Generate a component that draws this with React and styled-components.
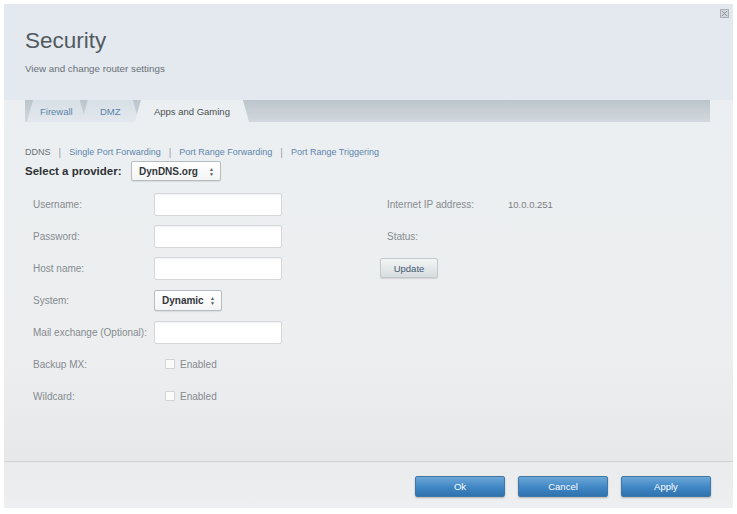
import React from "react";
import styled, { createGlobalStyle } from "styled-components";

const GlobalReset = createGlobalStyle`
  html,
  body,
  #root {
    margin: 0;
    padding: 0;
    box-sizing: border-box;
    background: #ffffff;
  }
  * { box-sizing: border-box; }
  body { font-family: "Liberation Sans", Arial, sans-serif; }
`;

const Frame = styled.div`
  width: 737px;
  height: 514px;
  padding: 4px 4px 6px 4px;
`;

const Panel = styled.div`
  width: 100%;
  height: 100%;
  display: flex;
  flex-direction: column;
  background: #eceff1;
  position: relative;
`;

const Header = styled.div`
  height: 96px;
  background: #e3e9ef;
  padding: 24px 0 0 21px;
  display: flex;
  flex-direction: column;
`;

const Title = styled.h1`
  margin: 0;
  font-size: 22.5px;
  font-weight: normal;
  color: #525a60;
`;

const Subtitle = styled.div`
  margin-top: 9px;
  font-size: 9.8px;
  color: #6a7075;
`;

const CloseIcon = styled.div`
  position: absolute;
  top: 5px;
  right: 4px;
  width: 9px;
  height: 9px;
  border: 1px solid #a9afb4;
  background: #d3d8dc;
  display: flex;
  align-items: center;
  justify-content: center;
`;

const TabRow = styled.div`
  height: 22px;
  margin: 0 23px 0 21px;
  display: flex;
  background: linear-gradient(to bottom, #bcc5cc, #d2d8dd);
`;

const Tab = styled.div`
  height: 22px;
  padding: 0 ${(p) => (p.$active ? "19px" : "13px")};
  margin-left: ${(p) => (p.$first ? "2px" : "-4px")};
  display: flex;
  align-items: center;
  font-size: 9.5px;
  color: ${(p) => (p.$active ? "#4a4f53" : "#5b85ad")};
  background: ${(p) =>
    p.$active ? "#eceff1" : "linear-gradient(to bottom, #d7dfe6, #e2e8ed)"};
  clip-path: polygon(6px 0, calc(100% - 6px) 0, 100% 100%, 0 100%);
  z-index: ${(p) => (p.$active ? 2 : 1)};
`;

const Body = styled.div`
  flex: 1;
  padding: 24px 0 0 21px;
  display: flex;
  flex-direction: column;
  background: linear-gradient(to bottom, #eceff1 0%, #eceef0 70%, #e6e8ea 100%);
  border-bottom: 1px solid #cdd1d4;
`;

const SubNav = styled.div`
  display: flex;
  align-items: center;
  font-size: 9px;
  color: #6b7075;
  height: 12px;
`;

const SubLink = styled.span`
  color: ${(p) => (p.$current ? "#6b7075" : "#5d86ad")};
`;

const Sep = styled.span`
  color: #9aa0a5;
  margin: 0 8px;
  font-size: 10px;
`;

const ProviderRow = styled.div`
  display: flex;
  align-items: center;
  margin-top: 3px;
  height: 20px;
`;

const ProviderLabel = styled.span`
  font-size: 11.5px;
  font-weight: bold;
  color: #2e3235;
  width: 106px;
`;

const Select = styled.div`
  width: ${(p) => p.$w}px;
  height: ${(p) => p.$h}px;
  border: 1px solid #b7bcc0;
  border-radius: 2px;
  background: linear-gradient(#ffffff, #f3f4f5);
  box-shadow: 0 1px 1px rgba(0, 0, 0, 0.08);
  display: flex;
  align-items: center;
  justify-content: space-between;
  padding: 0 6px 0 7px;
  font-size: 10px;
  font-weight: bold;
  color: #33373a;
`;

const Arrows = styled.span`
  display: flex;
  flex-direction: column;
  align-items: center;
  gap: 1px;
  font-size: 5px;
  line-height: 4px;
  color: #55595c;
`;

const Content = styled.div`
  display: flex;
  margin-top: 12px;
`;

const FormCol = styled.div`
  width: 355px;
  display: flex;
  flex-direction: column;
  gap: 10px;
  padding-left: 8px;
`;

const Row = styled.div`
  height: 22px;
  display: flex;
  align-items: center;
`;

const Label = styled.span`
  width: ${(p) => p.$w || 121}px;
  font-size: 10px;
  color: #868b8f;
  white-space: nowrap;
`;

const Input = styled.div`
  width: 128px;
  height: 23px;
  background: #ffffff;
  border: 1px solid #d3d7da;
  border-radius: 2px;
  box-shadow: inset 0 1px 1px rgba(0, 0, 0, 0.05);
`;

const CheckWrap = styled.label`
  display: flex;
  align-items: center;
  margin-left: 11px;
  font-size: 10px;
  color: #868b8f;
  gap: 5px;
`;

const Checkbox = styled.span`
  width: 10px;
  height: 10px;
  background: #fbfbfb;
  border: 1px solid #cfd3d6;
  border-radius: 1px;
`;

const InfoCol = styled.div`
  display: flex;
  flex-direction: column;
  gap: 10px;
`;

const InfoRow = styled(Row)`
  padding-left: 7px;
`;

const InfoValue = styled.span`
  font-size: 9.5px;
  color: #7b8084;
`;

const UpdateButton = styled.button`
  width: 58px;
  height: 20px;
  margin-left: -7px;
  border: 1px solid #c3c8cc;
  border-radius: 2px;
  background: linear-gradient(#f3f5f6, #d7dcdf);
  box-shadow: 0 1px 1px rgba(0, 0, 0, 0.12);
  font-family: inherit;
  font-size: 9.5px;
  color: #3f5a70;
  padding: 0;
`;

const Footer = styled.div`
  height: 46px;
  display: flex;
  justify-content: flex-end;
  align-items: center;
  gap: 13px;
  padding: 2px 22px 0 0;
  background: linear-gradient(to bottom, #e9ebed, #eeeff1);
`;

const BlueButton = styled.button`
  width: 90px;
  height: 21px;
  border: 1px solid #3f77a6;
  border-radius: 2px;
  background: linear-gradient(#6da8d8, #3f86c4 55%, #2f73ae);
  box-shadow: 0 1px 2px rgba(0, 0, 0, 0.25);
  color: #ffffff;
  font-family: inherit;
  font-size: 9.5px;
  padding: 0;
`;

const fields = [
  { label: "Username:", kind: "input" },
  { label: "Password:", kind: "input" },
  { label: "Host name:", kind: "input" },
  { label: "System:", kind: "select" },
  { label: "Mail exchange (Optional):", kind: "input" },
  { label: "Backup MX:", kind: "check" },
  { label: "Wildcard:", kind: "check" },
];

const subLinks = [
  "DDNS",
  "Single Port Forwarding",
  "Port Range Forwarding",
  "Port Range Triggering",
];

const SelectArrows = () => (
  <Arrows>
    <span>▲</span>
    <span>▼</span>
  </Arrows>
);

const App = () => {
  return (
    <>
      <GlobalReset />
      <Frame>
        <Panel>
          <CloseIcon>
            <svg width="7" height="7" viewBox="0 0 7 7">
              <path d="M1 1 L6 6 M6 1 L1 6" stroke="#8b9195" strokeWidth="1" />
            </svg>
          </CloseIcon>
          <Header>
            <Title>Security</Title>
            <Subtitle>View and change router settings</Subtitle>
          </Header>
          <TabRow>
            <Tab $first>Firewall</Tab>
            <Tab>&nbsp;&nbsp;DMZ&nbsp;&nbsp;</Tab>
            <Tab $active>Apps and Gaming</Tab>
          </TabRow>
          <Body>
            <SubNav>
              {subLinks.map((s, i) => (
                <React.Fragment key={s}>
                  {i > 0 && <Sep>|</Sep>}
                  <SubLink $current={i === 0}>{s}</SubLink>
                </React.Fragment>
              ))}
            </SubNav>
            <ProviderRow>
              <ProviderLabel>Select a provider:</ProviderLabel>
              <Select $w={90} $h={20}>
                DynDNS.org
                <SelectArrows />
              </Select>
            </ProviderRow>
            <Content>
              <FormCol>
                {fields.map((f) => (
                  <Row key={f.label}>
                    <Label>{f.label}</Label>
                    {f.kind === "input" && <Input />}
                    {f.kind === "select" && (
                      <Select $w={68} $h={21}>
                        Dynamic
                        <SelectArrows />
                      </Select>
                    )}
                    {f.kind === "check" && (
                      <CheckWrap>
                        <Checkbox />
                        Enabled
                      </CheckWrap>
                    )}
                  </Row>
                ))}
              </FormCol>
              <InfoCol>
                <InfoRow>
                  <Label>Internet IP address:</Label>
                  <InfoValue>10.0.0.251</InfoValue>
                </InfoRow>
                <InfoRow>
                  <Label>Status:</Label>
                </InfoRow>
                <InfoRow>
                  <UpdateButton>Update</UpdateButton>
                </InfoRow>
              </InfoCol>
            </Content>
          </Body>
          <Footer>
            <BlueButton>Ok</BlueButton>
            <BlueButton>Cancel</BlueButton>
            <BlueButton>Apply</BlueButton>
          </Footer>
        </Panel>
      </Frame>
    </>
  );
};

export default App;
